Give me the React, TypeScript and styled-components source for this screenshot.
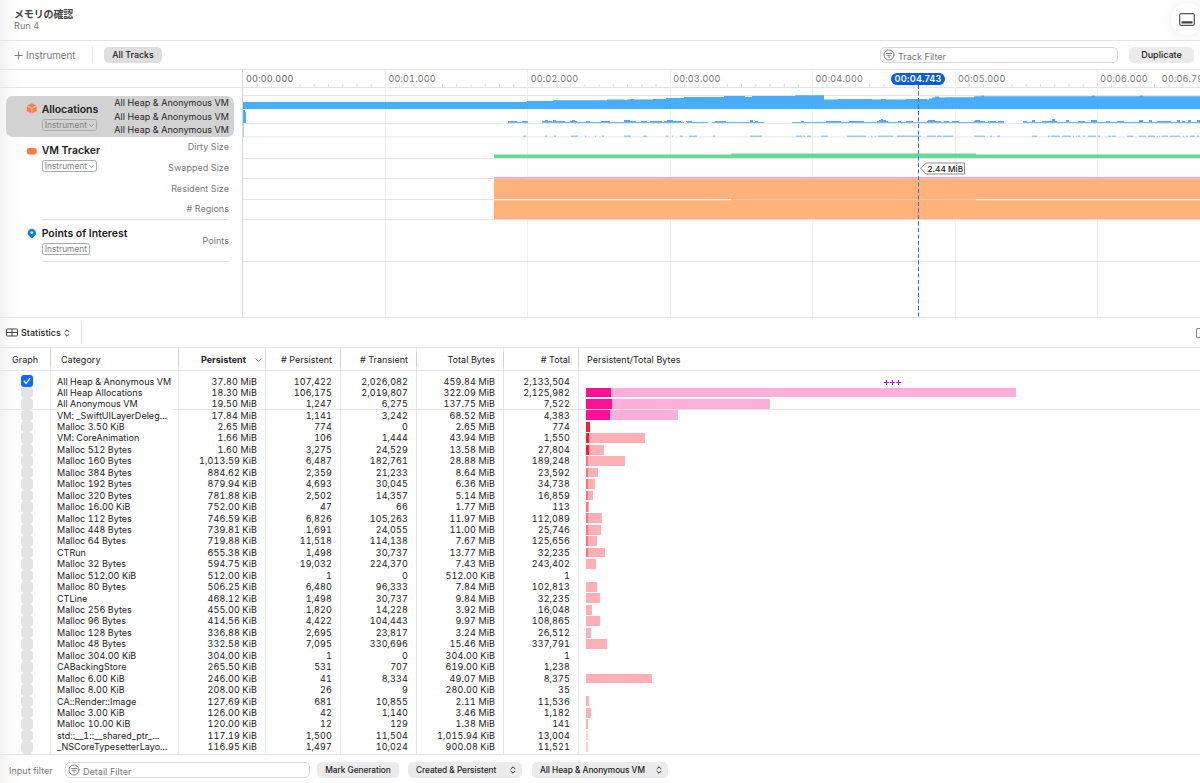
import React from "react";
import styled, { createGlobalStyle, css } from "styled-components";

const GlobalStyle = createGlobalStyle`
  * { box-sizing: border-box; }
  body { margin: 0; background: #fff; overflow: hidden; }
`;

const LINE = "#e4e4e4";

const Window = styled.div`
  width: 1200px;
  height: 783px;
  display: flex;
  flex-direction: column;
  overflow: hidden;
  position: relative;
  color: #222;
  font-family: Inter, "Noto Sans CJK JP", sans-serif;
  font-size: 9px;
  letter-spacing: 0.03px;
  background: linear-gradient(90deg, #f1f1f1 0, #fafafa 9px, #fff 22px);
  white-space: nowrap;
`;

const TitleBar = styled.header`
  height: 41px;
  display: flex;
  justify-content: space-between;
  border-bottom: 1px solid ${LINE};
  padding-left: 14px;
`;

const Titles = styled.div`
  display: flex;
  flex-direction: column;
  padding-top: 7px;
`;

const Title = styled.h1`
  margin: 0;
  font: 700 10px/13px "Noto Sans CJK JP", sans-serif;
  letter-spacing: -0.15px;
  color: #454545;
`;

const Subtitle = styled.span`
  line-height: 12px;
  color: #777;
  letter-spacing: 0.1px;
`;

const PanelToggle = styled.button`
  width: 32px;
  height: 32px;
  margin: 3px -3px 0 0;
  padding: 0;
  border: 0;
  border-radius: 50%;
  background: #fff;
  box-shadow: 0 1px 14px rgba(0, 0, 0, 0.07);
  display: flex;
  align-items: center;
  justify-content: center;
`;

const Toolbar = styled.div`
  height: 29px;
  display: flex;
  align-items: center;
  border-bottom: 1px solid ${LINE};
  padding: 0 6px 0 14px;
`;

const AddInstrument = styled.div`
  width: 79px;
  height: 16px;
  display: flex;
  align-items: center;
  gap: 3px;
  color: #777;
  font-size: 9.8px;
  letter-spacing: 0;
  border-right: 1px solid ${LINE};
`;

const Pill = styled.button<{ $w: number; $tone?: string; $size?: number; $push?: boolean }>`
  width: ${(p) => p.$w}px;
  height: 16px;
  padding: 0 ${(p) => (p.$push ? "6px 0 8px" : "0")};
  border: 0;
  border-radius: 5px;
  background: ${(p) => p.$tone ?? "#ebebeb"};
  color: #222;
  font: 500 ${(p) => p.$size ?? 8.3}px/16px Inter, sans-serif;
  letter-spacing: ${(p) => (p.$size ? 0 : -0.05)}px;
  display: flex;
  align-items: center;
  justify-content: ${(p) => (p.$push ? "space-between" : "center")};
  flex: none;
`;

const Field = styled.label<{ $w: number }>`
  width: ${(p) => p.$w}px;
  height: 16px;
  flex: none;
  display: flex;
  align-items: center;
  gap: 3px;
  padding-left: 2px;
  border: 1px solid #d6d6d6;
  border-radius: 5px;
  background: #fff;
  color: #777;
`;

const FieldText = styled.span`
  padding-top: 2px;
`;

const Spacer = styled.div`
  flex: 1;
`;

const TracePane = styled.section`
  height: 248px;
  display: flex;
  border-bottom: 1px solid ${LINE};
`;

const TrackList = styled.aside`
  width: 243px;
  display: flex;
  flex-direction: column;
  border-right: 1px solid #d9d9d9;
`;

const ListHead = styled.div`
  height: 18px;
  border-bottom: 1px solid ${LINE};
  flex: none;
`;

const Track = styled.div<{ $h: number; $selected?: boolean }>`
  height: ${(p) => p.$h}px;
  flex: none;
  display: grid;
  grid-template-columns: 15.7px 1fr auto;
  margin: 0 8px 0 6px;
  padding: 0 5px 0 20px;
  position: relative;
  ${(p) =>
    p.$selected
      ? css`
          margin-top: 8px;
          border-radius: 7px;
          background: #d2d2d2;
        `
      : css`
          &::after {
            content: "";
            position: absolute;
            left: 36px;
            right: 5px;
            bottom: 0;
            height: 1px;
            background: #e0e0e0;
          }
        `}
`;

const TrackIcon = styled.div<{ $top: number }>`
  padding-top: ${(p) => p.$top}px;
  svg { display: block; }
`;

const TrackInfo = styled.div<{ $top: number }>`
  padding-top: ${(p) => p.$top}px;
  display: flex;
  flex-direction: column;
  align-items: flex-start;
  gap: 3px;
`;

const TrackName = styled.span`
  font-size: 10.5px;
  line-height: 13px;
  font-weight: 600;
  letter-spacing: -0.03px;
  width: 0;
`;

const Tag = styled.span`
  height: 12px;
  display: flex;
  align-items: center;
  gap: 2px;
  padding: 0 2px;
  border: 1px solid #ababab;
  border-radius: 2.5px;
  color: #808080;
  font-size: 8.3px;
`;

const Lanes = styled.div<{ $rows: string; $dim?: boolean }>`
  display: grid;
  grid-template-rows: ${(p) => p.$rows};
  align-items: center;
  justify-items: end;
  margin-top: -1px;
  color: ${(p) => (p.$dim ? "#777" : "#262626")};
`;

const Timeline = styled.div`
  flex: 1;
  min-width: 0;
  display: flex;
  flex-direction: column;
  position: relative;
  overflow: hidden;
  background: #fff;
`;

const Ruler = styled.div`
  height: 18px;
  flex: none;
  display: grid;
  grid-template-columns: repeat(6, 142.4px) 1fr;
  border-bottom: 1px solid ${LINE};
  color: #777;
  line-height: 17px;
  letter-spacing: 0.2px;
  font-variant-numeric: tabular-nums;
`;

const RulerCell = styled.div<{ $first?: boolean }>`
  padding-left: 3px;
  display: flex;
  gap: 14px;
  font-weight: ${(p) => (p.$first ? 500 : 400)};
`;

const Playhead = styled.div`
  position: absolute;
  left: 648px;
  top: 2.5px;
  width: 54px;
  height: 12px;
  border-radius: 6px;
  background: #0b5cd8;
  color: #fff;
  font-weight: 600;
  line-height: 12px;
  text-align: center;
  letter-spacing: 0.15px;
`;

const Chart = styled.svg`
  position: absolute;
  left: 0;
  top: 0;
`;

const Callout = styled.div`
  position: absolute;
  left: 684.5px;
  top: 93px;
  font-weight: 500;
  font-size: 8.2px;
  line-height: 12px;
`;

const DetailBar = styled.div`
  height: 30px;
  flex: none;
  display: flex;
  align-items: center;
  border-bottom: 1px solid ${LINE};
  overflow: hidden;
`;

const DetailPicker = styled.div`
  width: 82px;
  height: 23px;
  display: flex;
  align-items: center;
  gap: 3px;
  padding-left: 6px;
  font-weight: 500;
  border-right: 1px solid ${LINE};
  flex: none;
`;

const CutIcon = styled.div`
  width: 4px;
  height: 10px;
  border: 1px solid #888;
  border-right: 0;
  border-radius: 2px 0 0 2px;
`;

const edges = [51, 179, 266, 341, 417, 504, 579];
const columns = edges.map((e, i) => `${e - (edges[i - 1] ?? 0)}px`).join(" ") + " 1fr";
const rules = edges
  .map((e) => `linear-gradient(#e8e8e8, #e8e8e8) ${e - 1}px 0 / 1px 100% no-repeat`)
  .join(", ");

const Table = styled.section`
  height: 407px;
  flex: none;
  overflow: hidden;
  background: ${rules};
  border-bottom: 1px solid ${LINE};
`;

const HeadRow = styled.div`
  height: 23px;
  display: grid;
  grid-template-columns: ${columns};
  align-items: center;
  border-bottom: 1px solid ${LINE};
`;

const HeadCell = styled.div<{ $align?: string; $pad?: string; $bold?: boolean }>`
  height: 15px;
  line-height: 15px;
  text-align: ${(p) => p.$align ?? "left"};
  padding: ${(p) => p.$pad ?? "0 8px 0 0"};
  font-weight: ${(p) => (p.$bold ? 700 : 400)};
  &:not(:last-child) { border-right: 1px solid #d2d2d2; }
  svg { margin-left: 9px; }
`;

const Body = styled.div`
  padding-top: 4.3px;
`;

const Row = styled.div<{ $split?: boolean }>`
  height: 11.45px;
  display: grid;
  grid-template-columns: ${columns};
  align-items: center;
  line-height: 11.45px;
  font-variant-numeric: tabular-nums;
  position: relative;
  ${(p) =>
    p.$split &&
    css`
      &::before {
        content: "";
        position: absolute;
        inset: auto 0 0 0;
        height: 1px;
        background: linear-gradient(90deg, ${LINE} 57px, transparent 57px, transparent 172px, ${LINE} 172px);
      }
    `}
`;

const Check = styled.span<{ $on?: boolean }>`
  display: flex;
  align-items: center;
  justify-content: center;
  width: 12px;
  height: ${(p) => (p.$on ? 12 : 11.45)}px;
  margin-left: 21px;
  border-radius: ${(p) => (p.$on ? 3 : 4)}px;
  background: ${(p) => (p.$on ? "#0a6cff" : "#e3e3e3")};
`;

const Name = styled.span`
  padding-left: 6px;
`;

const Num = styled.span`
  text-align: right;
  padding-right: 9px;
  letter-spacing: 0.12px;
`;

const Bar = styled.div<{ $hot?: boolean }>`
  margin-left: 7.4px;
  height: 9.8px;
  display: flex;
  background: ${(p) => (p.$hot ? "#ffb0da" : "#ffb0b4")};
`;

const PeekBar = styled(Bar)`
  grid-column: 8;
  width: 31px;
`;

const BarFill = styled.div<{ $tone: string }>`
  background: ${(p) => p.$tone};
`;

const Overflow = styled.svg`
  margin-left: 305px;
  margin-top: 3px;
`;

const BottomBar = styled.footer`
  flex: 1;
  display: flex;
  align-items: center;
  padding: 2px 0 0 9px;
  color: #777;
`;

const InputLabel = styled.span`
  width: 56px;
  padding-top: 1px;
`;

const Gap = styled.div<{ $w: number }>`
  width: ${(p) => p.$w}px;
`;

const FilterIcon = () => (
  <svg width="12" height="12" viewBox="0 0 12 12" fill="none" stroke="#777" strokeWidth="0.9" strokeLinecap="round">
    <circle cx="6" cy="6" r="5" />
    <path d="M3.2 4.5h5.6M4.2 6.3h3.6M5.3 8h1.4" />
  </svg>
);

const UpDown = () => (
  <svg width="6" height="8" viewBox="0 0 6 8" fill="none" stroke="#333" strokeWidth="1" strokeLinecap="round" strokeLinejoin="round">
    <path d="M1 2.8 3 .8l2 2M1 5.2l2 2 2-2" />
  </svg>
);

const ChevronDown = ({ w = 5 }: { w?: number }) => (
  <svg width={w} height={w * 0.6} viewBox="0 0 5 3" fill="none" stroke="#777" strokeWidth=".7" strokeLinecap="round">
    <path d="m.6.6 1.9 1.7L4.4.6" />
  </svg>
);

type Record = [string, string, string, string, string, string];

const records: Record[] = [
  ["All Heap & Anonymous VM", "37.80 MiB", "107,422", "2,026,082", "459.84 MiB", "2,133,504"],
  ["All Heap Allocations", "18.30 MiB", "106,175", "2,019,807", "322.09 MiB", "2,125,982"],
  ["All Anonymous VM", "19.50 MiB", "1,247", "6,275", "137.75 MiB", "7,522"],
  ["VM: _SwiftUILayerDeleg...", "17.84 MiB", "1,141", "3,242", "68.52 MiB", "4,383"],
  ["Malloc 3.50 KiB", "2.65 MiB", "774", "0", "2.65 MiB", "774"],
  ["VM: CoreAnimation", "1.66 MiB", "106", "1,444", "43.94 MiB", "1,550"],
  ["Malloc 512 Bytes", "1.60 MiB", "3,275", "24,529", "13.58 MiB", "27,804"],
  ["Malloc 160 Bytes", "1,013.59 KiB", "6,487", "182,761", "28.88 MiB", "189,248"],
  ["Malloc 384 Bytes", "884.62 KiB", "2,359", "21,233", "8.64 MiB", "23,592"],
  ["Malloc 192 Bytes", "879.94 KiB", "4,693", "30,045", "6.36 MiB", "34,738"],
  ["Malloc 320 Bytes", "781.88 KiB", "2,502", "14,357", "5.14 MiB", "16,859"],
  ["Malloc 16.00 KiB", "752.00 KiB", "47", "66", "1.77 MiB", "113"],
  ["Malloc 112 Bytes", "746.59 KiB", "6,826", "105,263", "11.97 MiB", "112,089"],
  ["Malloc 448 Bytes", "739.81 KiB", "1,691", "24,055", "11.00 MiB", "25,746"],
  ["Malloc 64 Bytes", "719.88 KiB", "11,518", "114,138", "7.67 MiB", "125,656"],
  ["CTRun", "655.38 KiB", "1,498", "30,737", "13.77 MiB", "32,235"],
  ["Malloc 32 Bytes", "594.75 KiB", "19,032", "224,370", "7.43 MiB", "243,402"],
  ["Malloc 512.00 KiB", "512.00 KiB", "1", "0", "512.00 KiB", "1"],
  ["Malloc 80 Bytes", "506.25 KiB", "6,480", "96,333", "7.84 MiB", "102,813"],
  ["CTLine", "468.12 KiB", "1,498", "30,737", "9.84 MiB", "32,235"],
  ["Malloc 256 Bytes", "455.00 KiB", "1,820", "14,228", "3.92 MiB", "16,048"],
  ["Malloc 96 Bytes", "414.56 KiB", "4,422", "104,443", "9.97 MiB", "108,865"],
  ["Malloc 128 Bytes", "336.88 KiB", "2,695", "23,817", "3.24 MiB", "26,512"],
  ["Malloc 48 Bytes", "332.58 KiB", "7,095", "330,696", "15.46 MiB", "337,791"],
  ["Malloc 304.00 KiB", "304.00 KiB", "1", "0", "304.00 KiB", "1"],
  ["CABackingStore", "265.50 KiB", "531", "707", "619.00 KiB", "1,238"],
  ["Malloc 6.00 KiB", "246.00 KiB", "41", "8,334", "49.07 MiB", "8,375"],
  ["Malloc 8.00 KiB", "208.00 KiB", "26", "9", "280.00 KiB", "35"],
  ["CA::Render::Image", "127.69 KiB", "681", "10,855", "2.11 MiB", "11,536"],
  ["Malloc 3.00 KiB", "126.00 KiB", "42", "1,140", "3.46 MiB", "1,182"],
  ["Malloc 10.00 KiB", "120.00 KiB", "12", "129", "1.38 MiB", "141"],
  ["std::__1::__shared_ptr_...", "117.19 KiB", "1,500", "11,504", "1,015.94 KiB", "13,004"],
  ["_NSCoreTypesetterLayo...", "116.95 KiB", "1,497", "10,024", "900.08 KiB", "11,521"],
];

const PX_PER_MIB = 1.3335;
const toMiB = (s: string) => {
  const n = parseFloat(s.replace(/,/g, ""));
  return s.endsWith("KiB") ? n / 1024 : n;
};

const UsageBar = ({ persistent, total }: { persistent: string; total: string }) => {
  const p = toMiB(persistent);
  const t = toMiB(total);
  if (t < 0.7) return <span />;
  const hot = p > 10;
  const fill = p < 0.63 ? 0 : Math.max(p * PX_PER_MIB, 1.6);
  const tone = hot ? "#ff0f96" : p > 1.2 ? "#ff1a2e" : "#ff747c";
  return (
    <Bar $hot={hot} style={{ width: Math.max(t * PX_PER_MIB, 1.2), opacity: t < 1 ? 0.6 : 1 }}>
      <BarFill $tone={tone} style={{ width: fill }} />
    </Bar>
  );
};

const STEP = 142.4;
const gridX = [1, 2, 3, 4, 5, 6].map((i) => i * STEP);
const ticks = Array.from({ length: 68 }, (_, i) => i).filter((i) => i % 10 !== 0);

// Heap size: [x, top] steps, relative to the timeline's origin
const heap: [number, number][] = [
  [0, 32], [284, 31], [310, 30.3], [364, 29.6], [381, 30], [384, 29.4], [387, 29], [391, 29.6], [410, 29], [423, 28],
  [441, 27], [481, 26], [502, 27], [509, 26], [552, 25.2], [581, 29.5], [595, 29], [629, 29.6], [638, 29],
  [643, 29.6], [663, 29], [684, 29.5], [686, 28.5], [689, 27.5], [692, 26.6], [696, 27.6], [703, 27.3], [731, 26.3],
  [738, 25.4], [741, 26.2], [849, 25.4], [852, 26.2], [897, 25.4], [900, 26.2],
];
const heapPath =
  heap.map(([x, y], i) => (i === 0 ? `M${x} ${y}` : `H${x}V${y}`)).join("") + "H957V39H0Z";

// Allocation activity: [x, width] runs and [x, width, height] peaks on them
const baseline: [number, number][] = [
  [265, 20], [299, 142], [444, 21], [469, 52], [549, 212], [780, 177],
];
const bumps: [number, number, number][] = [
  [265, 9, 1], [279, 6, 1], [299, 10, 1], [302, 3, 2], [310, 12, 1], [310, 3, 2], [327, 7, 1], [329, 3, 2],
  [343, 4, 1], [358, 9, 1], [381, 12, 1], [381, 6, 2], [398, 6, 1], [407, 12, 1], [421, 17, 1], [424, 6, 2],
  [443, 6, 1], [472, 11, 1], [507, 3, 2], [512, 3, 1], [558, 3, 1], [583, 15, 1], [606, 15, 1], [634, 11, 1],
  [636, 7, 2], [638, 2, 3], [655, 3, 1], [663, 7, 1], [684, 14, 1], [685, 7, 2], [701, 5, 1], [709, 7, 1],
  [731, 11, 1], [732, 5, 2], [745, 8, 1], [755, 6, 1], [780, 4, 1], [789, 3, 2], [799, 15, 1], [809, 3, 3],
  [823, 3, 2], [835, 7, 1], [848, 6, 2], [863, 4, 1], [874, 7, 1], [896, 4, 2], [906, 3, 2], [914, 14, 1],
  [934, 3, 2], [939, 3, 1], [945, 3, 2], [954, 3, 2],
];
const dashes: [number, number][] = [
  [280, 3], [302, 2], [311, 2], [328, 7], [342, 1], [352, 1], [359, 2], [381, 7], [400, 4], [423, 2], [429, 1],
  [437, 3], [446, 8], [470, 2], [507, 12], [553, 6], [560, 2], [564, 4], [578, 7], [604, 19], [628, 1], [632, 1],
  [635, 15], [654, 24], [684, 9], [694, 5], [700, 10], [731, 11], [747, 2], [754, 3], [789, 5], [805, 2], [808, 9],
  [819, 9], [830, 1], [833, 1], [835, 2], [840, 2], [845, 8], [855, 2], [865, 3], [869, 4], [884, 6], [896, 7],
  [905, 7], [914, 1], [916, 1], [919, 6], [927, 10], [940, 1], [943, 2], [947, 5], [954, 2],
];

const TimelineChart = () => (
  <Chart width="957" height="247" viewBox="0 0 957 247">
    <g fill="#f0f0f0">
      {gridX.map((x) => (
        <rect key={x} x={Math.floor(x)} y="0" width="1" height="247" />
      ))}
      {ticks.map((i) => (
        <rect key={i} x={i * 14.24 - 0.4} y="14" width="1" height="3" fill="#dcdcdc" />
      ))}
    </g>
    <g fill="#e6e6e6">
      {[25, 53, 66.4, 88, 108, 129, 149, 191].map((y) => (
        <rect key={y} x="0" y={y} width="957" height="1" />
      ))}
    </g>
    <path d={heapPath} fill="#48adfb" />
    <path d="M0 40h2v2h1v11H0z" fill="#48adfb" />
    <path d="M0 53h1v14H0z" fill="#a5d5fa" />
    <g fill="#48adfb">
      {baseline.map(([x, w]) => (
        <rect key={x} x={x} y="52" width={w} height="0.8" />
      ))}
      {bumps.map(([x, w, h]) => (
        <rect key={`${x}-${h}`} x={x} y={52 - h} width={w} height={h} />
      ))}
    </g>
    <g fill="#87c2ee">
      {dashes.map(([x, w]) => (
        <rect key={x} x={x} y="65.6" width={w} height="1.2" />
      ))}
    </g>
    <path d="M251 84.4H488V83.4H733V84.4H957V88H251Z" fill="#67d993" />
    <rect x="251" y="107" width="706" height="1.3" fill="#f0a0e8" />
    <rect x="251" y="108.5" width="706" height="40.7" fill="#ffb27a" />
    <rect x="251" y="129" width="237" height="1.2" fill="#fff" />
    <rect x="488" y="129" width="245" height="1" fill="#f2c4a2" />
    <rect x="733" y="129" width="224" height="1.2" fill="#fff" />
    <path d="M675.5 15V247" stroke="#2570e4" strokeWidth="1" strokeDasharray="4 2.5" />
    <path d="M677.5 98.3 683 93h38.5v11H683z" fill="#fff" stroke="#8a8a8a" />
  </Chart>
);

export default function App() {
  return (
    <Window>
      <GlobalStyle />
      <TitleBar>
        <Titles>
          <Title>メモリの確認</Title>
          <Subtitle>Run 4</Subtitle>
        </Titles>
        <PanelToggle>
          <svg width="16" height="13" viewBox="0 0 16 13">
            <rect x=".7" y=".7" width="14.6" height="11.6" rx="1.6" fill="none" stroke="#555" strokeWidth="1.2" />
            <rect x="2.5" y="8.2" width="11" height="2.4" rx=".5" fill="#444" />
          </svg>
        </PanelToggle>
      </TitleBar>
      <Toolbar>
        <AddInstrument>
          <svg width="9" height="9" viewBox="0 0 9 9" stroke="#777" strokeWidth=".9">
            <path d="M4.5.4v8.2M.4 4.5h8.2" />
          </svg>
          Instrument
        </AddInstrument>
        <Gap $w={11} />
        <Pill $w={58} $size={8.8} $tone="#dedede">All Tracks</Pill>
        <Spacer />
        <Field $w={238}>
          <FilterIcon />
          <FieldText>Track Filter</FieldText>
        </Field>
        <Gap $w={11} />
        <Pill $w={65} $size={9}>Duplicate</Pill>
      </Toolbar>

      <TracePane>
        <TrackList>
          <ListHead />
          <Track $h={41} $selected>
            <TrackIcon $top={7}>
              <svg width="11" height="11" viewBox="0 0 11 11">
                <path d="M5.8.4 10 2.5 5.8 4.7 1.6 2.5zM1 3.5 5.3 5.7v4.7L1 8.1zM10.6 3.5 6.3 5.7v4.7l4.3-2.3z" fill="#ff7d45" stroke="#ff7d45" strokeWidth=".3" strokeLinejoin="round" />
              </svg>
            </TrackIcon>
            <TrackInfo $top={7}>
              <TrackName>Allocations</TrackName>
              <Tag>Instrument <ChevronDown /></Tag>
            </TrackInfo>
            <Lanes $rows="14px 14px 13px">
              <span>All Heap &amp; Anonymous VM</span>
              <span>All Heap &amp; Anonymous VM</span>
              <span>All Heap &amp; Anonymous VM</span>
            </Lanes>
          </Track>
          <Track $h={83}>
            <TrackIcon $top={11}>
              <svg width="11" height="7" viewBox="0 0 11 7">
                <rect x=".9" width="9.8" height="6.6" rx="1.8" fill="#ff7d45" />
              </svg>
            </TrackIcon>
            <TrackInfo $top={7}>
              <TrackName>VM Tracker</TrackName>
              <Tag>Instrument <ChevronDown /></Tag>
            </TrackInfo>
            <Lanes $rows="21px 21px 20px 21px" $dim>
              <span>Dirty Size</span>
              <span>Swapped Size</span>
              <span>Resident Size</span>
              <span># Regions</span>
            </Lanes>
          </Track>
          <Track $h={42}>
            <TrackIcon $top={8}>
              <svg width="11" height="11" viewBox="0 0 11 11">
                <path d="M5.8 10.4 2.9 7.7a4 4 0 1 1 5.8 0z" fill="#0a78ff" />
                <circle cx="5.8" cy="4.6" r="1.4" fill="#fff" />
              </svg>
            </TrackIcon>
            <TrackInfo $top={7}>
              <TrackName>Points of Interest</TrackName>
              <Tag>Instrument</Tag>
            </TrackInfo>
            <Lanes $rows="42px" $dim>
              <span>Points</span>
            </Lanes>
          </Track>
        </TrackList>
        <Timeline>
          <Ruler>
            {[0, 1, 2, 3, 4, 5].map((s) => (
              <RulerCell key={s} $first={s === 0}>{`00:0${s}.000`}</RulerCell>
            ))}
            <RulerCell>
              <span>00:06.000</span>
              <span>00:06.79</span>
            </RulerCell>
          </Ruler>
          <TimelineChart />
          <Playhead>00:04.743</Playhead>
          <Callout>2.44 MiB</Callout>
        </Timeline>
      </TracePane>

      <DetailBar>
        <DetailPicker>
          <svg width="12" height="9" viewBox="0 0 12 9" fill="none" stroke="#333" strokeWidth=".9">
            <rect x=".5" y="1" width="11" height="7" rx=".8" />
            <path d="M.5 4.5h11M6 1v7" />
          </svg>
          Statistics
          <UpDown />
        </DetailPicker>
        <Spacer />
        <CutIcon />
      </DetailBar>

      <Table>
        <HeadRow>
          <HeadCell $pad="0 0 0 12px">Graph</HeadCell>
          <HeadCell $pad="0 0 0 10px">Category</HeadCell>
          <HeadCell $align="right" $bold $pad="0 3px 0 0">
            Persistent
            <ChevronDown w={7} />
          </HeadCell>
          <HeadCell $align="right"># Persistent</HeadCell>
          <HeadCell $align="right"># Transient</HeadCell>
          <HeadCell $align="right">Total Bytes</HeadCell>
          <HeadCell $align="right"># Total</HeadCell>
          <HeadCell $pad="0 0 0 8px">Persistent/Total Bytes</HeadCell>
        </HeadRow>
        <Body>
          {records.map(([name, persistent, live, transient, total, count], i) => (
            <Row key={name} $split={i === 2}>
              <Check $on={i === 0}>
                {i === 0 && (
                  <svg width="8" height="8" viewBox="0 0 8 8" fill="none" stroke="#fff" strokeWidth="1.3" strokeLinecap="round" strokeLinejoin="round">
                    <path d="m1.2 4.3 2 2.2L6.8 1.4" />
                  </svg>
                )}
              </Check>
              <Name>{name}</Name>
              <Num>{persistent}</Num>
              <Num>{live}</Num>
              <Num>{transient}</Num>
              <Num>{total}</Num>
              <Num>{count}</Num>
              {i === 0 ? (
                <Overflow width="17" height="5" viewBox="0 0 17 5" stroke="#a020f0" strokeWidth="1">
                  <path d="M0 2.5h5M2.5 0v5M6 2.5h5M8.5 0v5M12 2.5h5M14.5 0v5" />
                </Overflow>
              ) : (
                <UsageBar persistent={persistent} total={total} />
              )}
            </Row>
          ))}
          <Row>
            <Check />
            <PeekBar />
          </Row>
        </Body>
      </Table>

      <BottomBar>
        <InputLabel>Input filter</InputLabel>
        <Field $w={245}>
          <FilterIcon />
          <FieldText>Detail Filter</FieldText>
        </Field>
        <Gap $w={7} />
        <Pill $w={82}>Mark Generation</Pill>
        <Gap $w={9} />
        <Pill $w={114} $push>Created &amp; Persistent <UpDown /></Pill>
        <Gap $w={10} />
        <Pill $w={136} $push>All Heap &amp; Anonymous VM <UpDown /></Pill>
      </BottomBar>
    </Window>
  );
}
